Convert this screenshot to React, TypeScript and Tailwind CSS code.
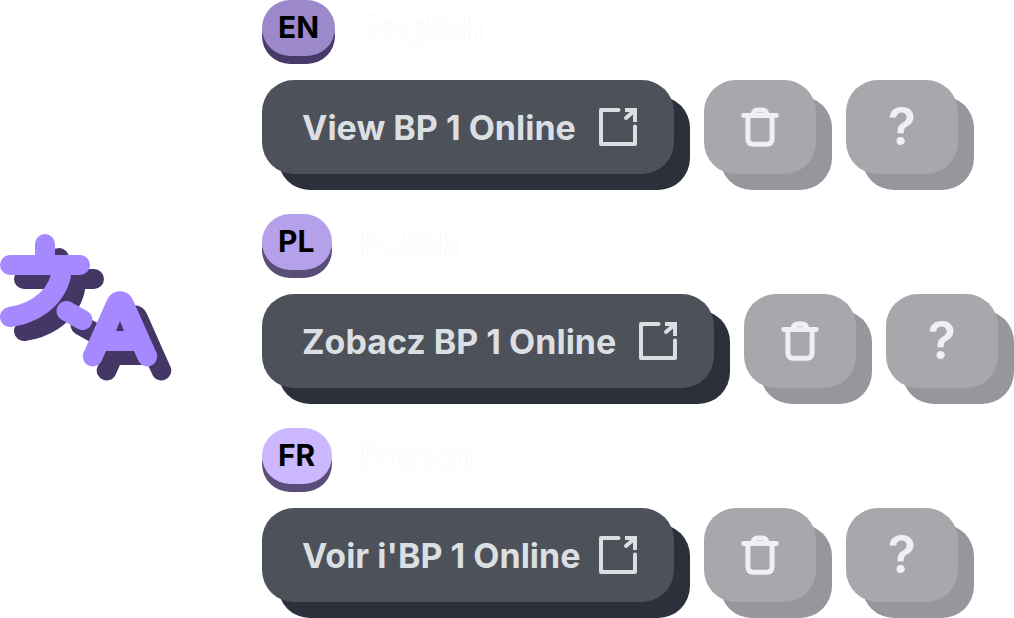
import React from "react";

type Language = {
  code: string;
  name: string;
  action: string;
  badge: string;
  width: string;
};

const languages: Language[] = [
  { code: "EN", name: "English", action: "View BP 1 Online", badge: "bg-[#9b89cc] shadow-[0_8px_0_#473a68]", width: "w-[412px]" },
  { code: "PL", name: "Polish", action: "Zobacz BP 1 Online", badge: "bg-[#b4a1ea] shadow-[0_8px_0_#5a4e78]", width: "w-[452px]" },
  { code: "FR", name: "French", action: "Voir i'BP 1 Online", badge: "bg-[#ccb8ff] shadow-[0_8px_0_#5a4e78]", width: "w-[412px]" },
];

function Glyphs() {
  return (
    <>
      <g fill="none" stroke="currentColor" strokeWidth="20" strokeLinecap="round">
        <path d="M45 10V31M10 31H80" />
        <path d="M62 33C61 60 38 79 10 83" />
        <path d="M66.500 77L82.500 86" />
      </g>
      <path
        fill="currentColor"
        fillRule="evenodd"
        d="M83 120L107 66A14 14 0 0 1 133 66L157 120A10 10 0 0 1 139 128L134 117H106L101 128A10 10 0 0 1 83 120ZM120 87L116 97H124Z"
      />
    </>
  );
}

function TranslateLogo() {
  return (
    <svg width="172" height="148" viewBox="0 0 172 148" className="mb-0.5 shrink-0" role="img" aria-label="Languages">
      <g className="text-[#443766]" transform="translate(14 14)">
        <Glyphs />
      </g>
      <g className="text-[#a688ff]">
        <Glyphs />
      </g>
    </svg>
  );
}

function ExternalIcon() {
  return (
    <svg width="40" height="40" viewBox="0 0 40 40" fill="none" stroke="currentColor" strokeWidth="4" aria-hidden="true" className="shrink-0">
      <path d="M20.5 3H3V37H37V19.5" strokeLinecap="round" strokeLinejoin="round" />
      <path d="M27 3H37V15" />
      <path d="M28 11L36 4" strokeLinecap="round" />
    </svg>
  );
}

function TrashIcon() {
  return (
    <svg width="40" height="40" viewBox="0 0 40 40" fill="none" stroke="currentColor" strokeWidth="5" strokeLinecap="round" aria-hidden="true">
      <path d="M3.8 8.5H36.2" />
      <path d="M13 7.5C13.5 4.5 15.5 2.9 17.5 2.9H22.5C24.5 2.9 26.5 4.5 27 7.5" />
      <path d="M7.9 9V31.5Q7.9 37.2 13.7 37.2H26.3Q32.1 37.2 32.1 31.5V9" />
    </svg>
  );
}

const squareButton =
  "flex h-[94px] w-28 shrink-0 items-center justify-center rounded-[32px] bg-[#a7a8ac] text-[#eff0f3] shadow-[16px_16px_0_#96979c]";

function LanguageBlock({ code, name, action, badge, width }: Language) {
  return (
    <section className="flex flex-col gap-6">
      <div className="flex h-14 items-center gap-7">
        <span className={`flex h-14 min-w-[70px] items-center rounded-full px-4 pb-0.5 text-[30px] font-bold text-black ${badge}`}>
          {code}
        </span>
        <h2 className="text-[34px] font-semibold text-white [-webkit-text-stroke:1px_#f6f6fa] [paint-order:stroke]">{name}</h2>
      </div>
      <div className="flex gap-[30px] pb-4">
        <a
          href="#"
          className={`flex h-[94px] shrink-0 items-center justify-between rounded-[32px] bg-[#4d515a] pr-9 pl-10 text-[34px] font-bold whitespace-nowrap text-[#dbdfe2] shadow-[16px_16px_0_#2c303b] ${width}`}
        >
          {action}
          <ExternalIcon />
        </a>
        <button type="button" aria-label="Delete" className={squareButton}>
          <TrashIcon />
        </button>
        <button type="button" aria-label="Help" className={`${squareButton} text-[52px] font-semibold`}>
          ?
        </button>
      </div>
    </section>
  );
}

export default function App() {
  return (
    <main className="flex items-center gap-[90px] overflow-hidden bg-white font-['Inter',sans-serif]">
      <TranslateLogo />
      <div className="flex flex-col gap-6">
        {languages.map((language) => (
          <LanguageBlock key={language.code} {...language} />
        ))}
      </div>
    </main>
  );
}
